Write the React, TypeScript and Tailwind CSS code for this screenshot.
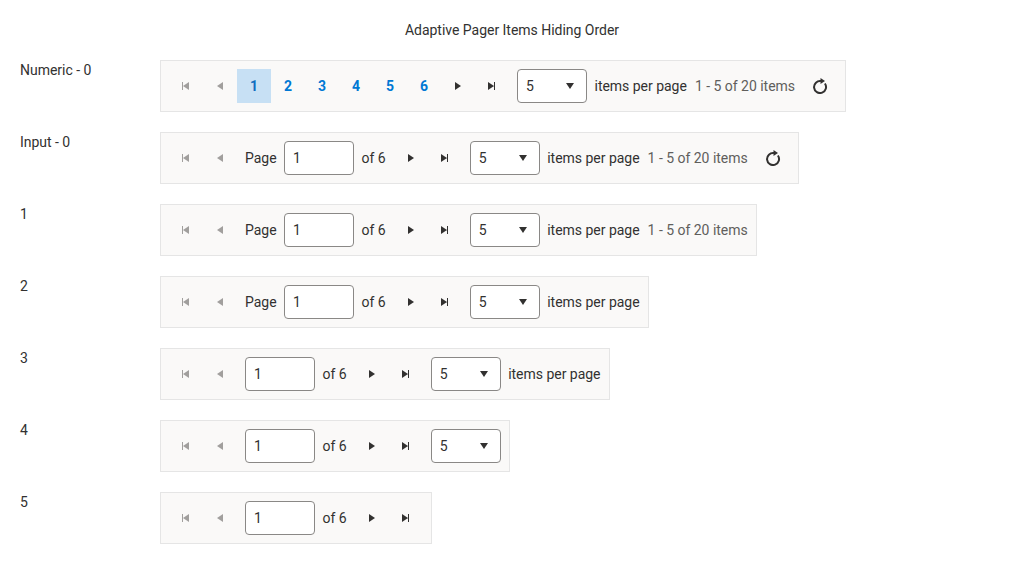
import type { ReactNode } from "react";

type IconName = "first" | "prev" | "next" | "last" | "down" | "refresh";

const paths: Record<Exclude<IconName, "refresh">, string> = {
  first: "M4 4h1v8H4zM11 4v8L5 8z",
  prev: "M11 4v8L5 8z",
  next: "M5 4v8l6-4z",
  last: "M4 4v8l6-4zM10 4h1v8h-1z",
  down: "M4 5h8l-4 6z",
};

function Icon({ name }: { name: IconName }) {
  return (
    <svg className="block size-4 shrink-0" viewBox="0 0 16 16" fill="currentColor" aria-hidden="true">
      {name === "refresh" ? (
        <>
          <path d="M12.9 5.5A6 6 0 1 1 9 3.1" fill="none" stroke="currentColor" strokeWidth="2" />
          <path d="M8.5 0v6l4.5-3z" />
        </>
      ) : (
        <path d={paths[name]} />
      )}
    </svg>
  );
}

function NavButton({ name, disabled = false }: { name: IconName; disabled?: boolean }) {
  return (
    <button
      aria-label={name}
      disabled={disabled}
      className={`flex size-[34px] shrink-0 items-center justify-center ${disabled ? "text-[#a19f9d]" : "text-[#323130]"}`}
    >
      <Icon name={name} />
    </button>
  );
}

function PageNumbers() {
  return (
    <div className="flex">
      {[1, 2, 3, 4, 5, 6].map((n) => (
        <button
          key={n}
          className={`size-[34px] text-center font-bold ${n === 1 ? "bg-[#c7e0f4] text-[#106ebe]" : "text-[#0078d4]"}`}
        >
          {n}
        </button>
      ))}
    </div>
  );
}

function PageInput({ label }: { label: boolean }) {
  return (
    <div className="mx-2 flex items-center gap-[7.5px]">
      {label && <span>Page</span>}
      <div className="flex h-[34px] w-[70px] items-center rounded-[4px] border border-[#8a8886] bg-white px-2">1</div>
      <span>of 6</span>
    </div>
  );
}

interface PagerProps {
  numeric?: boolean;
  label?: boolean;
  sizes?: boolean;
  sizesLabel?: boolean;
  info?: boolean;
  refresh?: boolean;
}

function Pager({ numeric, label = false, sizes, sizesLabel, info, refresh }: PagerProps) {
  return (
    <div className="flex h-[52px] items-center gap-2 border border-[#e5e5e5] bg-[#faf9f8] p-2 whitespace-nowrap">
      <div className="flex items-center">
        <NavButton name="first" disabled />
        <NavButton name="prev" disabled />
        {numeric ? <PageNumbers /> : <PageInput label={label} />}
        <NavButton name="next" />
        <NavButton name="last" />
      </div>
      {sizes && (
        <div className="flex items-center gap-[7.5px]">
          <div className="flex h-[34px] w-[70px] items-center justify-between rounded-[4px] border border-[#8a8886] bg-white px-2">
            <span>5</span>
            <Icon name="down" />
          </div>
          {sizesLabel && <span>items per page</span>}
        </div>
      )}
      {info && <span className="text-[#605e5c]">1 - 5 of 20 items</span>}
      {refresh && <NavButton name="refresh" />}
    </div>
  );
}

function Row({ title, children }: { title: string; children: ReactNode }) {
  return (
    <div className="flex items-start">
      <div className="w-[140px] shrink-0">{title}</div>
      {children}
    </div>
  );
}

export default function App() {
  return (
    <main className="h-[564px] bg-white px-5 pt-5 font-['Roboto',sans-serif] text-sm leading-5 tracking-[-0.02px] text-[#323130]">
      <h1 className="mb-5 text-center">Adaptive Pager Items Hiding Order</h1>
      <div className="flex flex-col gap-5">
        <Row title="Numeric - 0">
          <Pager numeric sizes sizesLabel info refresh />
        </Row>
        <Row title="Input - 0">
          <Pager label sizes sizesLabel info refresh />
        </Row>
        <Row title="1">
          <Pager label sizes sizesLabel info />
        </Row>
        <Row title="2">
          <Pager label sizes sizesLabel />
        </Row>
        <Row title="3">
          <Pager sizes sizesLabel />
        </Row>
        <Row title="4">
          <Pager sizes />
        </Row>
        <Row title="5">
          <Pager />
        </Row>
      </div>
    </main>
  );
}
